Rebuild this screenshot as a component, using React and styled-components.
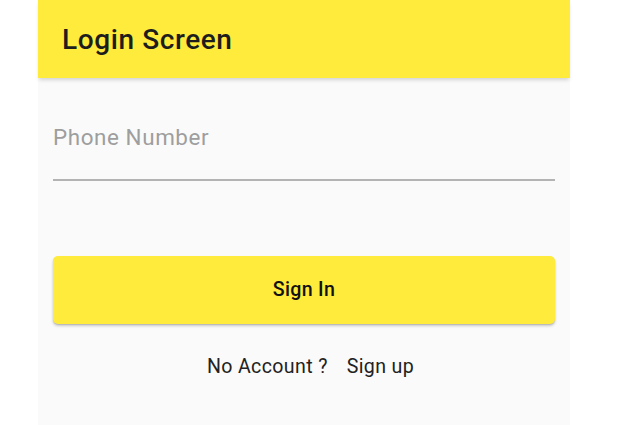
import React from 'react';
import styled, { createGlobalStyle } from 'styled-components';

const GlobalStyle = createGlobalStyle`
    html, body {
        margin: 0;
        padding: 0;
        background: #fff;
    }

    body {
        font-family: Roboto, 'Liberation Sans', sans-serif;
    }
`;

const Page = styled.div`
    display: flex;
    height: 425px;
    padding-left: 38px;
    overflow: hidden;
`;

const Screen = styled.div`
    display: flex;
    flex-direction: column;
    width: 532px;
    height: 100%;
    background: #fafafa;
`;

const AppBar = styled.header`
    display: flex;
    align-items: center;
    flex-shrink: 0;
    height: 78px;
    padding: 0 24px;
    background: #ffeb3b;
    box-shadow: 0 3px 4px -1px rgba(0, 0, 0, 0.16);
    position: relative;
    z-index: 1;
`;

const Title = styled.h1`
    margin: 0;
    font-size: 28px;
    font-weight: 500;
    color: #1d1d1d;
    letter-spacing: 0.6px;
`;

const Body = styled.main`
    display: flex;
    flex-direction: column;
    padding: 0 15px;
`;

const Field = styled.label`
    display: flex;
    flex-direction: column;
    margin-top: 45px;
`;

const FieldLabel = styled.span`
    font-size: 22.4px;
    line-height: 28px;
    letter-spacing: 0.6px;
    color: #9e9e9e;
`;

const Underline = styled.div`
    height: 1.5px;
    margin-top: 28px;
    background: #b3b3b3;
`;

const Button = styled.button`
    display: flex;
    align-items: center;
    justify-content: center;
    height: 68px;
    margin-top: 75px;
    border: 0;
    border-radius: 5px;
    background: #ffeb3b;
    box-shadow: 0 2px 3px rgba(0, 0, 0, 0.2), 0 1px 1px rgba(0, 0, 0, 0.1);
    font-family: inherit;
    font-size: 19.6px;
    font-weight: 500;
    letter-spacing: 0.3px;
    color: #111;
    cursor: pointer;
`;

const Footer = styled.div`
    display: flex;
    justify-content: center;
    align-items: center;
    gap: 19px;
    margin-top: 31px;
    padding-left: 13px;
    font-size: 19.6px;
    line-height: 24px;
    letter-spacing: 0.35px;
    color: #222;
`;

const Link = styled.span`
    cursor: pointer;
`;

export default function App() {
    return (
        <>
            <GlobalStyle />
            <Page>
                <Screen>
                    <AppBar>
                        <Title>Login Screen</Title>
                    </AppBar>
                    <Body>
                        <Field>
                            <FieldLabel>Phone Number</FieldLabel>
                            <Underline />
                        </Field>
                        <Button>Sign In</Button>
                        <Footer>
                            <span>No Account ?</span>
                            <Link>Sign up</Link>
                        </Footer>
                    </Body>
                </Screen>
            </Page>
        </>
    );
}
